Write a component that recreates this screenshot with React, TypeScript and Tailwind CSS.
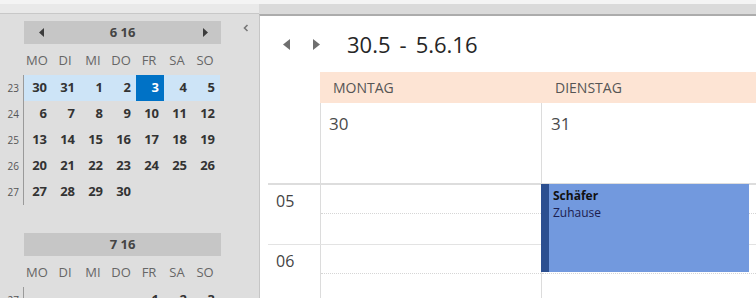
import React from 'react';

type Week = { no: number; days: (number | null)[]; current?: boolean };

const june: Week[] = [
  { no: 23, days: [30, 31, 1, 2, 3, 4, 5], current: true },
  { no: 24, days: [6, 7, 8, 9, 10, 11, 12] },
  { no: 25, days: [13, 14, 15, 16, 17, 18, 19] },
  { no: 26, days: [20, 21, 22, 23, 24, 25, 26] },
  { no: 27, days: [27, 28, 29, 30, null, null, null] },
];

const july: Week[] = [{ no: 27, days: [null, null, null, null, 1, 2, 3] }];

const dayNames = ['MO', 'DI', 'MI', 'DO', 'FR', 'SA', 'SO'];

function Tri({ dir, className }: { dir: 'left' | 'right'; className?: string }) {
  return (
    <svg width="5" height="9" viewBox="0 0 5 9" className={className}>
      <path d={dir === 'left' ? 'M5 0 L0 4.5 L5 9 Z' : 'M0 0 L5 4.5 L0 9 Z'} fill="currentColor" />
    </svg>
  );
}

function MiniMonth({ title, arrows, weeks }: { title: string; arrows?: boolean; weeks: Week[] }) {
  return (
    <div>
      {/* month header */}
      <div className="ml-[24px] w-[197px] h-[23px] bg-[#c6c6c6] grid grid-cols-[20px_1fr_20px] items-center text-[#3c3c3c]">
        <div className="flex justify-end">{arrows && <Tri dir="left" />}</div>
        <div className="text-center text-[13px] font-bold text-[#444]">{title}</div>
        <div className="flex justify-start pl-[2px]">{arrows && <Tri dir="right" />}</div>
      </div>

      {/* day names */}
      <div className="ml-[24px] h-[31px] pt-[3px] flex items-center">
        {dayNames.map((d) => (
          <div key={d} className="w-[28px] text-center text-[13px] text-[#666] pr-[2px]">
            {d}
          </div>
        ))}
      </div>

      {/* weeks */}
      {weeks.map((w) => (
        <div key={w.no} className="flex h-[26px]">
          <div className="w-[24px] border-r border-[#9a9a9a] text-[10px] text-[#555] text-right pr-[4px] flex items-center justify-end">
            {w.no}
          </div>
          <div className={`flex ${w.current ? 'bg-[#cde4f7]' : ''}`}>
            {w.days.map((d, i) => {
              const selected = w.current && d === 3;
              return (
                <div
                  key={i}
                  className={`w-[28px] h-[26px] flex items-center justify-end pr-[5px] text-[13px] font-bold ${
                    selected ? 'bg-[#0072c6] text-white' : 'text-[#333]'
                  }`}
                >
                  {d ?? ''}
                </div>
              );
            })}
          </div>
        </div>
      ))}
    </div>
  );
}

function HourRow({ label, first, event }: { label: string; first?: boolean; event?: boolean }) {
  return (
    <div
      className={`ml-[8px] flex shrink-0 ${
        first ? 'h-[61px] border-t-2 border-[#dddddd]' : 'h-[60px] border-t border-[#e3e3e3]'
      }`}
    >
      <div className="w-[52px] pl-[8px] pt-[5px] text-[16px] leading-[22px] text-[#444]">{label}</div>
      <div className="w-[221px] border-l border-[#dcdcdc]">
        <div className="h-[29px] border-b border-dotted border-[#d6d6d6]" />
      </div>
      <div className="flex-1 border-l border-[#dcdcdc] relative">
        <div className="h-[29px] border-b border-dotted border-[#d6d6d6]" />
        {event && (
          <div className="absolute z-10 top-[-1px] left-[-1px] w-[208px] h-[88px] bg-[#7299de] flex">
            <div className="w-[8px] bg-[#2c4f90]" />
            <div className="pl-[4px] pt-[3px] text-[12px] leading-[17px]">
              <div className="font-bold text-[#111]">Schäfer</div>
              <div className="text-[#1c2050]">Zuhause</div>
            </div>
          </div>
        )}
      </div>
    </div>
  );
}

export default function App() {
  return (
    <div className="w-[756px] h-[298px] overflow-hidden bg-[#dedede] flex flex-col font-['Open_Sans',sans-serif]">
      <div className="h-[4px] shrink-0 bg-[#f4f4f4]" />
      <div className="flex-1 flex min-h-0 overflow-hidden">
        {/* Left: navigation pane with mini calendars */}
        <div className="w-[259px] shrink-0 flex flex-col">
          <div className="h-[9px] shrink-0 bg-[#e9e9e9] border-b border-[#c8c8c8] box-content" />
          <div className="flex pt-[7px] shrink-0">
            <div className="w-[230px]">
              <MiniMonth title="6 16" arrows weeks={june} />
              <div className="h-[28px]" />
              <MiniMonth title="7 16" weeks={july} />
            </div>
            <div className="pl-[13px] pt-[3px] text-[#777]">
              <svg width="6" height="8" viewBox="0 0 6 8">
                <path d="M4.5 1 L1.5 4 L4.5 7" stroke="currentColor" strokeWidth="1.6" fill="none" />
              </svg>
            </div>
          </div>
        </div>

        {/* Right: week view */}
        <div className="flex-1 flex flex-col">
          <div className="h-[10px] shrink-0 bg-[#dadada]" />
          <div className="flex-1 bg-white border-t-2 border-l border-t-[#acacac] border-l-[#c6c6c6] flex flex-col">
            {/* title row */}
            <div className="h-[56px] shrink-0 flex items-center pl-[23px] text-[#6f6f6f]">
              <svg width="7" height="11" viewBox="0 0 7 11">
                <path d="M7 0 L0 5.5 L7 11 Z" fill="currentColor" />
              </svg>
              <svg width="7" height="11" viewBox="0 0 7 11" className="ml-[23px]">
                <path d="M0 0 L7 5.5 L0 11 Z" fill="currentColor" />
              </svg>
              <div className="ml-[27px] text-[22px] text-[#262626] leading-none">
                30.5<span className="inline-block mx-[9px]">-</span>5.6.16
              </div>
            </div>

            {/* day headers */}
            <div className="h-[31px] shrink-0 flex">
              <div className="w-[60px]" />
              <div className="flex-1 bg-[#fde4d4] flex items-center text-[14px] text-[#555]">
                <div className="w-[221px] pl-[13px]">MONTAG</div>
                <div className="pl-[14px]">DIENSTAG</div>
              </div>
            </div>

            {/* dates / all-day area */}
            <div className="h-[80px] shrink-0 flex">
              <div className="w-[60px]" />
              <div className="w-[221px] border-l border-[#dcdcdc] pl-[8px] pt-[9px] text-[17px] leading-[23px] text-[#4a4a4a]">
                30
              </div>
              <div className="flex-1 border-l border-[#dcdcdc] pl-[9px] pt-[9px] text-[17px] leading-[23px] text-[#4a4a4a]">
                31
              </div>
            </div>

            {/* hours */}
            <HourRow label="05" first event />
            <HourRow label="06" />
          </div>
        </div>
      </div>
    </div>
  );
}
